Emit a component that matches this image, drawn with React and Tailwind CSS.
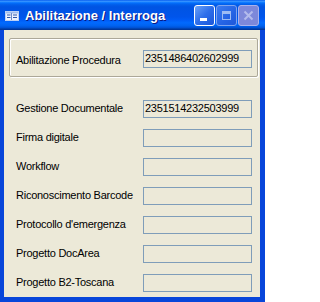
import React from "react";

const rows = [
  ["Gestione Documentale", "2351514232503999"],
  ["Firma digitale", ""],
  ["Workflow", ""],
  ["Riconoscimento Barcode", ""],
  ["Protocollo d'emergenza", ""],
  ["Progetto DocArea", ""],
  ["Progetto B2-Toscana", ""],
];

function Field({ value }) {
  return (
    <div className="w-[109px] h-[18px] border border-[#7F9DB9] bg-[#ECE9D8] flex items-center pl-[1px] text-[11px] text-black leading-none">
      {value}
    </div>
  );
}

export default function App() {
  return (
    <div className="w-[265px] h-[302px] flex flex-col bg-[#0846DA] font-['Liberation_Sans',Arial,sans-serif] select-none">
      {/* title bar */}
      <div className="h-[30px] shrink-0 flex items-center pl-[5px] pr-[6px] bg-[linear-gradient(to_bottom,#0058EE_0%,#3A93FF_4%,#288EFF_6%,#127DFF_8%,#036FFC_10%,#0262EE_14%,#0057E5_20%,#0054E3_24%,#0055EB_56%,#005BF5_66%,#026AFE_76%,#0062EF_86%,#0052D6_92%,#0040AB_96%,#003092_100%)]">
        <svg width="14" height="10" viewBox="0 0 14 10" className="shrink-0 mt-[1px]">
          <rect x="0.5" y="0.5" width="13" height="9" fill="#EEF3FF" stroke="#BCD0F4" />
          <rect x="1" y="1" width="12" height="1.5" fill="#9FBCEB" />
          <line x1="6.5" y1="2" x2="6.5" y2="9" stroke="#6E8CC8" />
          <rect x="2" y="3.5" width="3.5" height="1" fill="#2E56A8" />
          <rect x="2" y="6" width="3.5" height="1" fill="#2E56A8" />
          <rect x="8" y="3.5" width="4" height="1" fill="#2E56A8" />
          <rect x="8" y="6" width="4" height="1" fill="#2E56A8" />
        </svg>
        <div className="ml-[6px] mt-[2px] text-[13px] font-bold text-white [text-shadow:1px_1px_0_#0A1883] whitespace-nowrap">
          Abilitazione / Interroga
        </div>
        <div className="ml-auto flex gap-[1px] mt-[1px]">
          {/* minimize */}
          <div className="w-[21px] h-[21px] rounded-[3px] border border-white bg-[linear-gradient(135deg,#6AA2F8_0%,#2E6EEA_50%,#1B56D9_100%)] flex items-end pl-[5px] pb-[4px]">
            <div className="w-[7px] h-[3px] bg-white" />
          </div>
          {/* maximize (disabled) */}
          <div className="w-[21px] h-[21px] rounded-[3px] border border-[#7FA4EE] bg-[linear-gradient(135deg,#3C7CF0_0%,#2563E4_60%,#1E58DA_100%)] flex items-center justify-center">
            <div className="w-[9px] h-[9px] border border-[#9DBBF3] border-t-[3px]" />
          </div>
          {/* close (disabled) */}
          <div className="w-[21px] h-[21px] rounded-[3px] border border-[#A9B2EC] bg-[#7D88DA] flex items-center justify-center">
            <svg width="11" height="11" viewBox="0 0 11 11">
              <path d="M1.5 1.5 L9.5 9.5 M9.5 1.5 L1.5 9.5" stroke="#B3BBEC" strokeWidth="2" />
            </svg>
          </div>
        </div>
      </div>

      {/* client */}
      <div className="flex-1 ml-[4px] mr-[5px] mb-[5px] bg-[#ECE9D8] flex flex-col pt-[8px] text-[11px] text-black tracking-[-0.25px]">
        <div className="ml-[5px] mr-[2px] border border-[#ACA899] shadow-[inset_1px_1px_0_#fff,1px_1px_0_#fff] rounded-[2px] flex items-center pl-[6px] pt-[10px] pb-[7px]">
          <div className="w-[127px] pt-[3px] whitespace-nowrap">Abilitazione Procedura</div>
          <Field value="2351486402602999" />
        </div>

        <div className="mt-[23px] flex flex-col gap-[11px] pl-[12px]">
          {rows.map(([label, value]) => (
            <div key={label} className="flex items-center h-[18px]">
              <div className="w-[127px] whitespace-nowrap">{label}</div>
              <Field value={value} />
            </div>
          ))}
        </div>
      </div>
    </div>
  );
}
